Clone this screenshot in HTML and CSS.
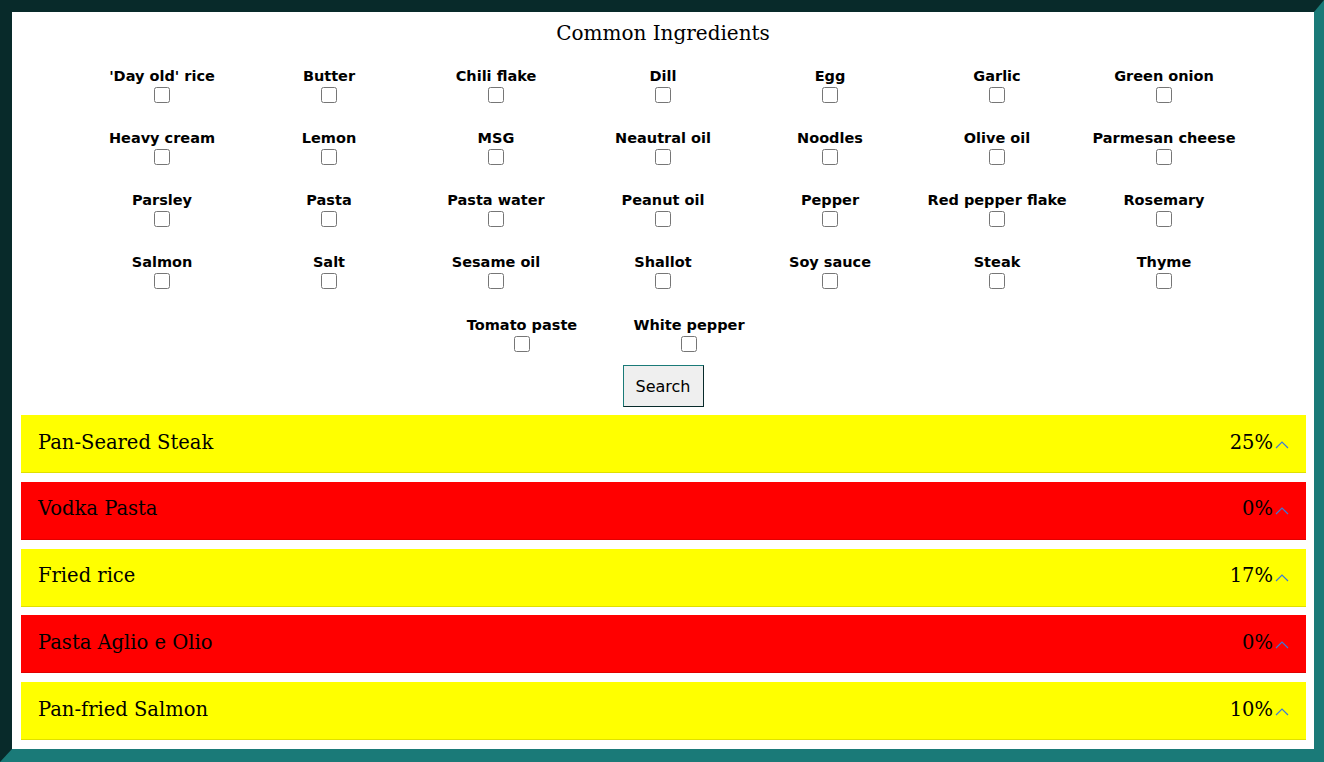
FILE: index.html
```html
<!DOCTYPE html>
<html>
<head>
<meta charset="utf-8">
<link rel="stylesheet" href="styles.css">
</head>
<body>
<div class="frame">
  <h1 class="title">Common Ingredients</h1>
  <form class="ingredients">
    <label class="ing"><span>'Day old' rice</span><input type="checkbox"></label>
    <label class="ing"><span>Butter</span><input type="checkbox"></label>
    <label class="ing"><span>Chili flake</span><input type="checkbox"></label>
    <label class="ing"><span>Dill</span><input type="checkbox"></label>
    <label class="ing"><span>Egg</span><input type="checkbox"></label>
    <label class="ing"><span>Garlic</span><input type="checkbox"></label>
    <label class="ing"><span>Green onion</span><input type="checkbox"></label>
    <label class="ing"><span>Heavy cream</span><input type="checkbox"></label>
    <label class="ing"><span>Lemon</span><input type="checkbox"></label>
    <label class="ing"><span>MSG</span><input type="checkbox"></label>
    <label class="ing"><span>Neautral oil</span><input type="checkbox"></label>
    <label class="ing"><span>Noodles</span><input type="checkbox"></label>
    <label class="ing"><span>Olive oil</span><input type="checkbox"></label>
    <label class="ing"><span>Parmesan cheese</span><input type="checkbox"></label>
    <label class="ing"><span>Parsley</span><input type="checkbox"></label>
    <label class="ing"><span>Pasta</span><input type="checkbox"></label>
    <label class="ing"><span>Pasta water</span><input type="checkbox"></label>
    <label class="ing"><span>Peanut oil</span><input type="checkbox"></label>
    <label class="ing"><span>Pepper</span><input type="checkbox"></label>
    <label class="ing"><span>Red pepper flake</span><input type="checkbox"></label>
    <label class="ing"><span>Rosemary</span><input type="checkbox"></label>
    <label class="ing"><span>Salmon</span><input type="checkbox"></label>
    <label class="ing"><span>Salt</span><input type="checkbox"></label>
    <label class="ing"><span>Sesame oil</span><input type="checkbox"></label>
    <label class="ing"><span>Shallot</span><input type="checkbox"></label>
    <label class="ing"><span>Soy sauce</span><input type="checkbox"></label>
    <label class="ing"><span>Steak</span><input type="checkbox"></label>
    <label class="ing"><span>Thyme</span><input type="checkbox"></label>
    <label class="ing"><span>Tomato paste</span><input type="checkbox"></label>
    <label class="ing"><span>White pepper</span><input type="checkbox"></label>
    <span class="spacer"></span>
    <div class="actions"><button type="button" class="search">Search</button></div>
  </form>
  <div class="recipes">
    <div class="recipe partial"><span class="name">Pan-Seared Steak</span><span class="score">25%<svg class="chev" viewBox="0 0 14 8" width="14" height="8"><polyline points="1,7 7,1 13,7"/></svg></span></div>
    <div class="recipe none"><span class="name">Vodka Pasta</span><span class="score">0%<svg class="chev" viewBox="0 0 14 8" width="14" height="8"><polyline points="1,7 7,1 13,7"/></svg></span></div>
    <div class="recipe partial"><span class="name">Fried rice</span><span class="score">17%<svg class="chev" viewBox="0 0 14 8" width="14" height="8"><polyline points="1,7 7,1 13,7"/></svg></span></div>
    <div class="recipe none"><span class="name">Pasta Aglio e Olio</span><span class="score">0%<svg class="chev" viewBox="0 0 14 8" width="14" height="8"><polyline points="1,7 7,1 13,7"/></svg></span></div>
    <div class="recipe partial"><span class="name">Pan-fried Salmon</span><span class="score">10%<svg class="chev" viewBox="0 0 14 8" width="14" height="8"><polyline points="1,7 7,1 13,7"/></svg></span></div>
  </div>
</div>
</body>
</html>
```
FILE: styles.css
```css
html, body {
  margin: 0;
  padding: 0;
  background: #ffffff;
}
.frame {
  box-sizing: border-box;
  width: 1324px;
  height: 762px;
  border-style: solid;
  border-width: 12px 10px 13px 12px;
  border-color: #082a2a #1a7a78 #1a7a78 #082a2a;
  background: #ffffff;
  display: flex;
  flex-direction: column;
}
.title {
  margin: 0;
  padding-top: 9px;
  height: 32px;
  box-sizing: border-box;
  text-align: center;
  font-family: "DejaVu Serif", Georgia, serif;
  font-weight: normal;
  font-size: 20px;
  line-height: 24px;
  color: #000;
}
.ingredients {
  width: 1169px;
  margin: 0 auto;
  display: flex;
  flex-wrap: wrap;
  justify-content: center;
  padding-top: 23.5px;
}
.ing {
  width: 167px;
  height: 62.25px;
  display: flex;
  flex-direction: column;
  align-items: center;
  font-family: "DejaVu Sans", Verdana, sans-serif;
  font-weight: bold;
  font-size: 14.5px;
  line-height: 17px;
  color: #000;
}
.ing input {
  width: 16px;
  height: 16px;
  margin: 2px 0 0 0;
}
.spacer {
  width: 115px;
}
.actions {
  width: 100%;
  display: flex;
  justify-content: center;
  margin-top: -13.75px;
}
.search {
  width: 81px;
  height: 42px;
  font-family: "DejaVu Sans", Verdana, sans-serif;
  font-size: 16px;
  color: #000;
  background: #efefef;
  border: 1px solid;
  border-color: #1a7a78 #082a2a #082a2a #1a7a78;
  padding: 0;
}
.recipes {
  display: flex;
  flex-direction: column;
  gap: 8.75px;
  padding: 8px 8px 0 9px;
}
.recipe {
  height: 58px;
  box-sizing: border-box;
  display: flex;
  align-items: center;
  justify-content: space-between;
  padding: 0 17px 3px 17px;
  font-family: "DejaVu Serif", Georgia, serif;
  font-size: 19.5px;
  color: #000;
  border-bottom: 1px solid rgba(0, 0, 0, 0.12);
}
.recipe.partial { background: #ffff00; }
.recipe.none { background: #ff0000; }
.score {
  display: flex;
  align-items: center;
}
.chev {
  margin-left: 2px;
  margin-top: 5px;
  fill: none;
  stroke: #3a7ad8;
  stroke-width: 1.2;
}
```
